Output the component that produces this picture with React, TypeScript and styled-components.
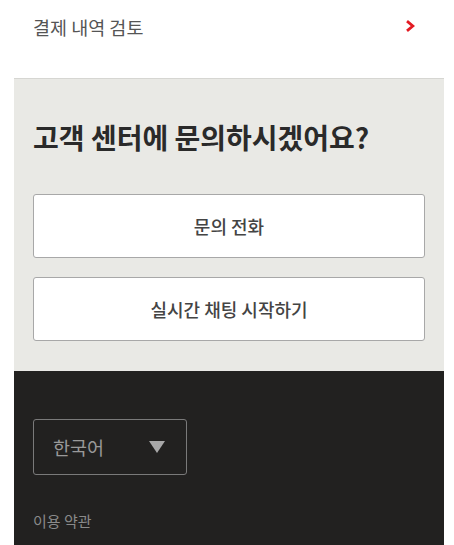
import React from 'react'
import styled, { createGlobalStyle } from 'styled-components'

const GlobalStyle = createGlobalStyle`
    html, body {
        margin: 0;
        padding: 0;
        background: #fff;
        font-family: "Noto Sans CJK KR", "Noto Sans", sans-serif;
    }
`

const Page = styled.div`
    margin: 0 10px 0 14px;
    display: flex;
    flex-direction: column;
`

const LinkRow = styled.div`
    display: flex;
    align-items: center;
    justify-content: space-between;
    height: 54px;
    padding: 0 29px 0 19px;
    margin-bottom: 24px;
    font-size: 18.5px;
    color: #555;
`

const Chevron = styled.svg`
    width: 10px;
    height: 12px;
    margin-top: -2px;
`

const HelpSection = styled.section`
    background: #e9e9e5;
    border-top: 1px solid #d6d6d2;
    padding: 40px 19px 30px;
    display: flex;
    flex-direction: column;
`

const Heading = styled.h2`
    margin: 0 0 39px;
    font-size: 28px;
    font-weight: 700;
    line-height: 36px;
    color: #2a2a2a;
`

const Actions = styled.div`
    display: flex;
    flex-direction: column;
    gap: 19px;
`

const ActionButton = styled.button`
    height: 64px;
    background: #fff;
    border: 1px solid #a8a8a8;
    border-radius: 3px;
    font-family: inherit;
    font-size: 18px;
    font-weight: 500;
    color: #444;
    cursor: pointer;
`

const Footer = styled.footer`
    background: #222120;
    padding: 48px 19px 16px;
    min-height: 175px;
    box-sizing: border-box;
    display: flex;
    flex-direction: column;
    align-items: flex-start;
    gap: 35px;
`

const LangSelect = styled.div`
    width: 154px;
    height: 56px;
    box-sizing: border-box;
    border: 1px solid #7a7a7a;
    border-radius: 3px;
    display: flex;
    align-items: center;
    justify-content: space-between;
    padding: 0 21px 0 19px;
    font-size: 18.5px;
    color: #999;
`

const Triangle = styled.svg`
    width: 16px;
    height: 12px;
    margin-top: 0;
`

const FooterLink = styled.a`
    font-size: 15px;
    color: #8a8a8a;
    text-decoration: none;
`

export default function App() {
    return (
        <>
            <GlobalStyle />
            <Page>
                <LinkRow>
                    <span>결제 내역 검토</span>
                    <Chevron viewBox="0 0 10 12">
                        <path d="M2 1.2 L7.8 6 L2 10.8" fill="none" stroke="#e31b23" strokeWidth="2.8" />
                    </Chevron>
                </LinkRow>
                <HelpSection>
                    <Heading>고객 센터에 문의하시겠어요?</Heading>
                    <Actions>
                        <ActionButton>문의 전화</ActionButton>
                        <ActionButton>실시간 채팅 시작하기</ActionButton>
                    </Actions>
                </HelpSection>
                <Footer>
                    <LangSelect>
                        <span>한국어</span>
                        <Triangle viewBox="0 0 16 12">
                            <path d="M0 0 H16 L8 12 Z" fill="#a8a8a8" />
                        </Triangle>
                    </LangSelect>
                    <FooterLink href="#">이용 약관</FooterLink>
                </Footer>
            </Page>
        </>
    )
}
